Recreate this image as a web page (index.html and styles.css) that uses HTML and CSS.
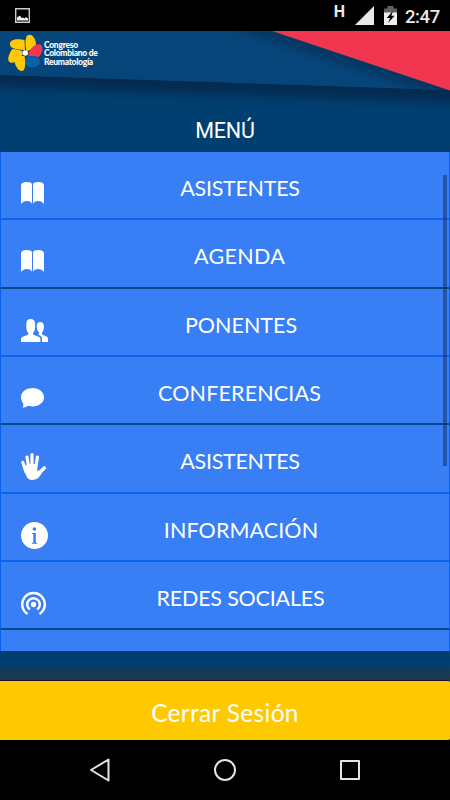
FILE: index.html
```html
<!DOCTYPE html>
<html lang="es">
<head>
<meta charset="utf-8">
<title>Congreso Colombiano de Reumatología</title>
<link rel="stylesheet" href="styles.css">
</head>
<body>
<div class="status">
  <svg class="shot" width="15" height="15" viewBox="0 0 15 15"><path d="M.7.7h13.6v13.6H.7z" fill="none" stroke="#ccc" stroke-width="1.4"/><path d="M2 12.500V9.500l1.500-1L5 7.500l1.500 2.500 1.500-.5 1.500 1L11 9l2 1.500v2z" fill="#eee"/></svg>
  <span class="net">H</span>
  <svg class="signal" width="19" height="19" viewBox="0 0 19 19"><path d="M19 0v19H0z" fill="#e9e9e9"/></svg>
  <svg class="battery" width="13" height="19" viewBox="0 0 13 19"><path d="M0 2.500h3.500V0h6v2.500H13V7H0z" fill="#606060"/><path d="M0 6.500h13V19H0z" fill="#eee"/><path d="M8.800 5 2.800 12h3.300l-2 5L10.600 9.800H7.400z" fill="#000"/></svg>
  <span class="clock">2:47</span>
</div>
<main class="app">
  <header class="header">
    <svg class="banner" width="450" height="90" viewBox="0 0 450 90">
      <defs>
        <linearGradient id="fall" gradientUnits="userSpaceOnUse" x1="225" y1="51" x2="224.200" y2="75"><stop offset="0" stop-color="#04294c"/><stop offset=".4" stop-color="#032f57"/><stop offset="1" stop-color="#003f70" stop-opacity="0"/></linearGradient>
        <linearGradient id="side" gradientUnits="userSpaceOnUse" x1="350" y1="26" x2="344" y2="44"><stop offset="0" stop-color="#043762"/><stop offset=".4" stop-color="#053b69"/><stop offset="1" stop-color="#06457a" stop-opacity="0"/></linearGradient>
      </defs>
      <path d="M0 44 450 59v28L0 72z" fill="url(#fall)"/>
      <path d="M0 0h450v59L0 44z" fill="#06457a"/>
      <path d="M273 0h-58L390 57l60 2z" fill="url(#side)"/>
      <path d="M272 0h178v59.500z" fill="#f1374f"/>
    </svg>
    <svg class="flower" width="36" height="38" viewBox="0 0 36 38">
      <path d="M18 16.500C16 15.500 9 15.500 5.500 14 2.500 12.500 2 9 4.500 6.800 8 4.500 14 5 17.500 6z" fill="#ffca05"/>
      <path d="M19.500 17C18 11 18 5 20 1.800 22 0 24.500.5 26.500 3c2.500 3.500 3 7 1.800 9.500C26 15 22.500 16.500 19.500 17z" fill="#ffca05"/>
      <path d="M21 21.500C22 16 26.500 10.500 32 10.300c3 .2 4 3 3.400 5.700-.7 3.300-2.500 6-4 7.300C29 22 24 22.500 21 21.500z" fill="#f1374f"/>
      <path d="M19.500 22.500c3-.5 9-.3 12 1.500 2 2 1.800 5.500-.5 7.500-3 2-8.500 1.700-11.300.8C18.500 29.500 18.500 25.500 19.500 22.500z" fill="#0961ab"/>
      <path d="M17.500 22c1 4 1.300 10.500-.7 14-1.800 1.700-4.500.9-6.300-1.500C8 31 7 27.500 7.500 25c2-2.500 6.500-3 10-3z" fill="#ffca05"/>
      <path d="M16 19.500c-2 4-6.500 9-11 9.300C2.500 29 1 27 1.200 24.500 1.700 21 3.500 17 5.500 15c3 .3 7 .8 9.500 2z" fill="#ffca05"/>
      <circle cx="18.300" cy="19" r="2.700" fill="#fff"/>
    </svg>
    <div class="brand">Congreso<br>Colombiano de<br>Reumatología</div>
  </header>
  <h1 class="title">MENÚ</h1>
  <div class="menu">
    <nav class="list">
      <a class="item"><svg class="icon" width="27" height="28" viewBox="0 0 27 28"><use href="#book"/></svg><span class="label asis">ASISTENTES</span></a>
      <a class="item dark"><svg class="icon" width="27" height="28" viewBox="0 0 27 28"><defs><path id="book" d="M0 6.500Q0 3 5.500 3q5 0 5.500 2V25q-1-3-5-3-4 0-6 3zM12 5Q12.500 3 17.500 3 23 3 23 6.500V25q-2-3-6-3-4 0-5 3z" fill="#fff"/></defs><use href="#book"/></svg><span class="label agenda">AGENDA</span></a>
      <a class="item"><svg class="icon" width="27" height="28" viewBox="0 0 27 28"><g fill="#fff"><path d="M0 26v-3c0-2 2-2.500 5-3.500 2-.6 2.400-1 2.400-2.300C5.800 15 5.300 13.500 5.300 11V7.500C5.300 5 6.800 3 9.700 3s4.400 2 4.400 4.500V11c0 2.500-.5 4-2.100 6.200 0 1.300.4 1.700 2.400 2.300 3 1 5 1.500 5 3.500v3z"/><path d="M21 26v-3.500c0-2-1.500-3-4-4 .8-.5 1.200-.9 1.100-2C16.500 15 15.700 13 15.700 10c0-2.500 1.300-4 3.500-4s3.700 1.500 3.700 4.300c0 3-.5 4.700-2 6.500 0 1.700.4 2 2.400 2.700C26 20.500 27 21 27 23v3z"/></g></svg><span class="label ponentes">PONENTES</span></a>
      <a class="item dark"><svg class="icon" width="27" height="28" viewBox="0 0 27 28"><path d="M11.500 4C18 4 23 8 23 13.300c0 5.200-5 9.200-11.500 9.200-2 0-3.500-.3-5-.4-1.500.9-3 1.600-5 1.600 1-1.500 1-2.800.7-4.200C.800 17.500 0 15.500 0 13.300 0 8 5 4 11.500 4z" fill="#fff"/></svg><span class="label conf">CONFERENCIAS</span></a>
      <a class="item"><svg class="icon" width="27" height="28" viewBox="0 0 27 28"><g fill="none" stroke="#fff" stroke-linecap="round" stroke-width="3.200"><path d="M1.800 10.500 5 20M6 5 8 18M11 2.600V18M16.400 5 14.500 18"/><path d="M23.300 16 16 23" stroke-width="3.600"/></g><path d="M3 14.500 6.500 12h9.400l.3 7 2.800-.7 2 2.700C18.500 24 17.500 28 11 28 5 28 4.500 21 3 14.500z" fill="#fff"/></svg><span class="label asis">ASISTENTES</span></a>
      <a class="item"><svg class="icon" width="27" height="28" viewBox="0 0 27 28"><circle cx="13.500" cy="14.500" r="13.500" fill="#fff"/><circle cx="13.400" cy="8" r="1.800" fill="#387ef5"/><path d="M11 12h3.800v9.800h1.500v.9H10.800v-.9h1.500V13H11z" fill="#387ef5"/></svg><span class="label info">INFORMACIÓN</span></a>
      <a class="item dark"><svg class="icon" width="27" height="28" viewBox="0 0 27 28"><circle cx="12.500" cy="15.500" r="2.700" fill="#fff"/><g fill="none" stroke="#fff" stroke-width="2.500"><path d="M8.800 20.600A6.300 6.300 0 1 1 16.200 20.600M6.600 25A11.300 11.300 0 1 1 18.400 25"/></g></svg><span class="label redes">REDES SOCIALES</span></a>
      <a class="item"></a>
    </nav>
    <div class="scroll"></div>
  </div>
  <div class="footer"><button class="logout">Cerrar Sesión</button></div>
</main>
<div class="navbar">
  <svg width="22" height="26" viewBox="0 0 22 26"><path d="M19.500 2.500v21L2 13z"/></svg>
  <svg width="24" height="26" viewBox="0 0 24 26"><circle cx="12" cy="13" r="10"/></svg>
  <svg width="22" height="26" viewBox="0 0 22 26"><path d="M2 4h18v18H2z"/></svg>
</div>
</body>
</html>
```
FILE: styles.css
```css
* { box-sizing: border-box; }
body {
  margin: 0;
  width: 450px;
  height: 800px;
  overflow: hidden;
  display: flex;
  flex-direction: column;
  background: #000;
  color: #fff;
  font-family: Lato, "Liberation Sans", sans-serif;
}
svg { display: block; flex: none; }
.status {
  height: 31px;
  flex: none;
  display: flex;
  align-items: flex-start;
  padding: 0 10px 0 15px;
  font-family: Roboto, sans-serif;
  color: #e9e9e9;
}
.shot { margin-top: 8px; }
.net { margin: 3px 10px 0 auto; font-size: 16px; line-height: 17px; font-weight: 700; }
.signal { margin-top: 6px; }
.battery { margin: 6px 8px 0 10px; }
.clock { font-size: 18.500px; line-height: 22px; margin-top: 6px; font-weight: 500; width: 35px; letter-spacing: -.4px; white-space: nowrap; }
.app {
  height: 709px;
  flex: none;
  display: flex;
  flex-direction: column;
  background: #003f70;
}
.header {
  position: relative;
  height: 88px;
  flex: none;
  display: flex;
  align-items: flex-start;
  padding: 3px 0 0 7px;
}
.banner { position: absolute; left: 0; top: 0; }
.flower { position: relative; }
.brand {
  position: relative;
  margin: 6.500px 0 0 1px;
  font-size: 8.500px;
  line-height: 8.600px;
  font-weight: 900;
  letter-spacing: -.28px;
  white-space: nowrap;
}
.title {
  margin: 0;
  height: 33px;
  flex: none;
  text-align: center;
  font: 400 21.500px/23px Roboto, sans-serif;
  letter-spacing: -.2px;
}
.menu { position: relative; height: 499px; flex: none; overflow: hidden; }
.item {
  height: 68.350px;
  display: flex;
  align-items: flex-start;
  padding: 0 0 0 20px;
  background: #387ef5;
  border: solid #0c60ee;
  border-width: 0 1px 2px;
  border-bottom-color: #0c63ee;
}
.item.dark { border-bottom-color: #074988; }
.icon { margin-top: 27px; }
.label {
  flex: 1;
  text-align: center;
  margin-top: 22px;
  padding-right: 15px;
  font-size: 21.500px;
  line-height: 28px;
  white-space: nowrap;
}
.asis { letter-spacing: -.28px; padding-right: 17px; }
.agenda { letter-spacing: .3px; padding-right: 18px; }
.conf { letter-spacing: .15px; padding-right: 18px; }
.info { letter-spacing: .1px; }
.redes { letter-spacing: -.2px; padding-right: 16px; }
.scroll {
  position: absolute;
  right: 3px;
  top: 23px;
  width: 4px;
  height: 291px;
  background: rgba(20, 40, 90, .5);
}
.footer {
  flex: 1;
  display: flex;
  align-items: flex-end;
  background: linear-gradient(#003f70 0, #003f70 40%, #213748 98%);
  background-size: 100% 29px;
  background-repeat: no-repeat;
}
.logout {
  width: 100%;
  height: 60px;
  margin: 0;
  padding: 5px 0 0;
  border: 0;
  border-top: 1px solid #1a0b37;
  border-radius: 0 2px 2px 0;
  background: #ffc900;
  color: #fff;
  font: 400 24.500px/30px Lato, sans-serif;
  letter-spacing: .3px;
}
.navbar {
  height: 60px;
  flex: none;
  display: flex;
  justify-content: space-between;
  align-items: center;
  padding: 0 89px;
}
.navbar svg { fill: none; stroke: #e4e4e4; stroke-width: 2; stroke-linejoin: round; }
```
